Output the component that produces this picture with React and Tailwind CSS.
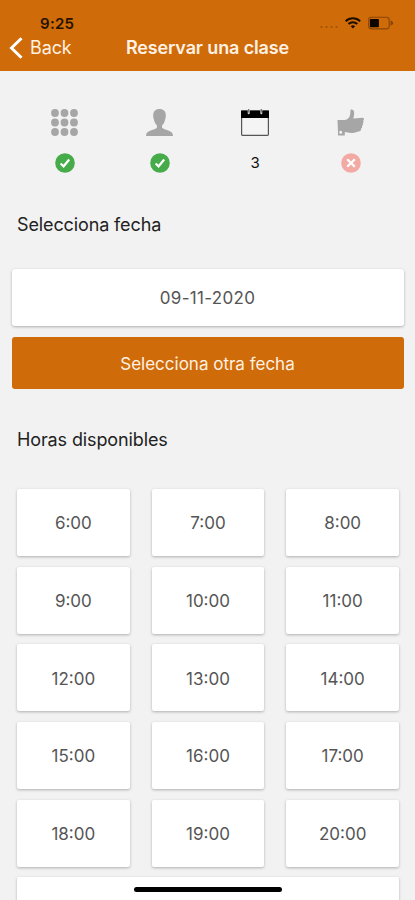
const HOURS = [
  "6:00", "7:00", "8:00",
  "9:00", "10:00", "11:00",
  "12:00", "13:00", "14:00",
  "15:00", "16:00", "17:00",
  "18:00", "19:00", "20:00",
];

const CARD = "bg-white text-[#555] shadow-[0_1px_3px_rgba(0,0,0,0.28)]";

function StatusBar() {
  return (
    <div className="flex h-[34px] items-end justify-between pl-10 pr-5">
      <span className="text-[15px] font-semibold leading-[21px] tracking-[0.3px] text-[#251300]">
        9:25
      </span>
      <svg className="mb-0.5 h-[18px] w-[76px]" viewBox="0 0 76 18">
        {/* cobertura */}
        <g fill="#a45205">
          <circle cx="2.5" cy="13" r="1.1" />
          <circle cx="7.5" cy="13" r="1.1" />
          <circle cx="12.5" cy="13" r="1.1" />
          <circle cx="17.5" cy="13" r="1.1" />
        </g>
        {/* wifi */}
        <g fill="none" stroke="#1d0e00" strokeWidth="2">
          <path d="M26.7 7.2a10.2 10.2 0 0 1 14.4 0" />
          <path d="M29.5 10a6.2 6.2 0 0 1 8.800 0" />
        </g>
        <path d="M33.9 14.6 31.700 12.300a3.200 3.200 0 0 1 4.400 0z" fill="#1d0e00" />
        {/* batería */}
        <rect x="49.700" y="3.300" width="20.500" height="11.600" rx="2.600" fill="none" stroke="#8a4606" strokeWidth="1.100" />
        <path d="M71.500 6.500v5.200c1.800-.7 2.800-1.500 2.800-2.600s-1-1.900-2.800-2.600z" fill="#8a4606" />
        <rect x="50.900" y="5" width="9" height="8.200" rx="0.800" fill="#0d0600" />
      </svg>
    </div>
  );
}

function Header() {
  return (
    <header className="h-[71px] bg-[#cf6b08] text-[#fff1e4]">
      <StatusBar />
      <div className="grid h-[27px] grid-cols-[1fr_auto_1fr] items-center">
        <button className="flex items-center gap-[7px] pl-[9px] text-[18px] tracking-[-0.1px]">
          <svg className="h-[22px] w-[14px]" viewBox="0 0 14 22" fill="none" stroke="#fff" strokeWidth="3">
            <path d="M12.500 1.200 2.500 11l10 9.800" />
          </svg>
          Back
        </button>
        <h1 className="text-[18px] font-semibold tracking-[-0.13px]">Reservar una clase</h1>
      </div>
    </header>
  );
}

function DotsIcon() {
  return (
    <svg className="size-[27px]" viewBox="0 0 27 27" fill="#a6a6a6">
      {[4, 13.500, 23].map((y) =>
        [4, 13.500, 23].map((x) => <circle key={`${x}-${y}`} cx={x} cy={y} r="3.900" />)
      )}
    </svg>
  );
}

function PersonIcon() {
  return (
    <svg className="size-[27px]" viewBox="0 0 27 27" fill="#a6a6a6">
      <path d="M13.500 0C9.500 0 7.200 2.300 7.200 6.300c0 2 .2 3 .7 4.300.5 2.700 1.500 4.600 3 5.700v2.400c-1 1.200-3.400 1.800-6.200 2.800C1.600 22.600 0 24 0 27h27c0-3-1.600-4.400-4.700-5.500-2.800-1-5.200-1.600-6.200-2.800v-2.400c1.500-1.100 2.500-3 3-5.700.5-1.300.7-2.300.7-4.300C19.800 2.300 17.500 0 13.500 0z" />
    </svg>
  );
}

function CalendarIcon() {
  return (
    <svg className="h-[27px] w-[28px]" viewBox="0 0 28 27">
      <rect x="0.600" y="2" width="26.800" height="24.400" rx="0.800" fill="#f4f4f4" stroke="#555" strokeWidth="1.200" />
      <path d="M0 1.500h28V9H0z" fill="#000" />
      <path d="M7.700 0v4.300M20.300 0v4.300" stroke="#d8d8d8" strokeWidth="2" strokeLinecap="round" />
      <path d="M7.700 0v3.500M20.300 0v3.500" stroke="#555" strokeWidth="0.900" />
    </svg>
  );
}

function ThumbIcon() {
  return (
    <svg className="size-[27px]" viewBox="0 0 27 27" fill="#a6a6a6">
      <path
        fillRule="evenodd"
        d="M.5 11h7.300c2.700-.3 5-2.600 5.400-5.500L13.500.8c1.500-1 3.500.2 3.600 2.400.2 2.300-.2 4.300-.8 6.200l9.500-.6c1.500.2 1.600 2.200.2 2.700 1 .8.700 2.300-.4 2.800.8.900.4 2.200-.7 2.700.6 1 .1 2.100-1 2.500.5 1.300-.2 2.500-1.500 2.800l-5.100 1.400c-3.600.6-6.700.1-9.500-.6v3.400H1.100zM3.700 21.800a1.500 1.500 0 1 0 0 3 1.500 1.500 0 0 0 0-3z"
      />
    </svg>
  );
}

function CheckBadge() {
  return (
    <svg className="size-5" viewBox="0 0 20 20">
      <circle cx="10" cy="10" r="9.800" fill="#46ab49" />
      <path d="M5.600 10.500 8.600 13.300 14.200 6.500" fill="none" stroke="#fff" strokeWidth="2.200" />
    </svg>
  );
}

function CrossBadge() {
  return (
    <svg className="ml-px size-5" viewBox="0 0 20 20">
      <circle cx="10" cy="10" r="9.800" fill="#f3aaa5" />
      <path d="m6.200 6.200 7.600 7.600M13.800 6.200l-7.600 7.600" stroke="#fff" strokeWidth="2.300" />
    </svg>
  );
}

function Step({ icon, status }) {
  return (
    <div className="flex flex-col items-center">
      <div className="flex h-[27px] items-center">{icon}</div>
      <div className="mt-[17px] flex h-5 items-center text-[15px] text-[#111]">{status}</div>
    </div>
  );
}

export default function App() {
  return (
    <div className="relative h-[900px] w-[415px] overflow-hidden bg-[#f2f2f2] font-['Inter','Liberation_Sans',sans-serif]">
      <Header />

      {/* pasos de la reserva */}
      <div className="grid grid-cols-4 px-[17px] pt-[38px]">
        <Step icon={<DotsIcon />} status={<CheckBadge />} />
        <Step icon={<PersonIcon />} status={<CheckBadge />} />
        <Step icon={<CalendarIcon />} status={<span className="pt-px">3</span>} />
        <Step icon={<ThumbIcon />} status={<CrossBadge />} />
      </div>

      <h2 className="mt-[38px] pl-[17px] text-[18px] leading-7 tracking-[-0.12px] text-[#222]">
        Selecciona fecha
      </h2>

      <div className="mt-[30px] px-[11.500px]">
        <div className={`flex h-[57px] items-center justify-center rounded-[3px] pt-[3px] text-[17px] tracking-[0.3px] ${CARD}`}>
          09-11-2020
        </div>
        <button className="mt-[11px] flex h-[52px] w-full items-center justify-center rounded-[3px] bg-[#cf6b08] pt-[3px] text-[17px] text-[#fff1e4]">
          Selecciona otra fecha
        </button>
      </div>

      <h2 className="mt-[37px] pl-[17px] text-[18px] leading-7 tracking-[-0.12px] text-[#222]">
        Horas disponibles
      </h2>

      <div className="mt-[35px] grid grid-cols-3 gap-x-[22px] gap-y-[10.700px] pl-[17px] pr-4">
        {HOURS.map((hour) => (
          <button
            key={hour}
            className={`flex h-[67px] items-center justify-center rounded-[2px] pt-[3px] text-[17px] ${CARD}`}
          >
            {hour}
          </button>
        ))}
        <div className={`col-span-3 h-[67px] rounded-[2px] ${CARD}`} />
      </div>

      {/* indicador de inicio */}
      <div className="absolute bottom-2 left-[134px] h-[5px] w-[148px] rounded-full bg-black" />
    </div>
  );
}
